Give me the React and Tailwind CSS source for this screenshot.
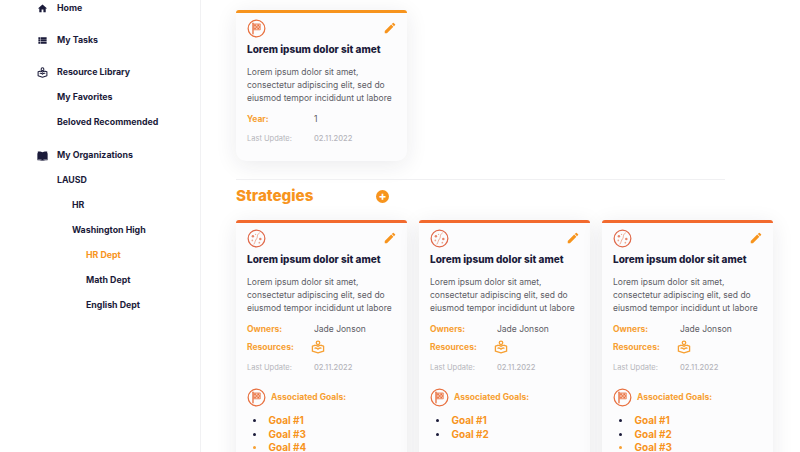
import React from "react";
import { MdEdit, MdHome, MdViewList } from "react-icons/md";

function FlagCircle({ className }) {
  return (
    <svg viewBox="0 0 20 20" className={className} fill="none">
      <circle cx="10" cy="10" r="8.8" stroke="#e8703f" strokeWidth="1.3" />
      <path d="M6.3 4.4V15.6" stroke="#e8703f" strokeWidth="1.4" strokeLinecap="round" />
      <path d="M7 5.2h7v6.2H7z" fill="#f8c9b5" stroke="#e8703f" strokeWidth="0.7" />
      <path d="M7.6 5.8h1.7v1.7H7.6zM11 5.8h1.7v1.7H11zM9.3 7.5H11v1.7H9.3zM12.7 7.5h1v1.7h-1zM7.6 9.2h1.7v1.7H7.6zM11 9.2h1.7v1.7H11z" fill="#e8703f" />
    </svg>
  );
}

function StrategyCircle({ className }) {
  return (
    <svg viewBox="0 0 20 20" className={className} fill="none">
      <circle cx="10" cy="10" r="8.8" stroke="#e0694a" strokeWidth="1.3" />
      <path d="M13 4.2C9.6 6.4 11.8 8.4 10 10.4C8.6 12 8.8 13.6 7.4 15.8" stroke="#eda58e" strokeWidth="1" strokeLinecap="round" />
      <circle cx="6.2" cy="7.6" r="1.3" fill="#e8866a" />
      <circle cx="14" cy="10.6" r="1.3" fill="#e8866a" />
      <circle cx="5.6" cy="12" r="0.9" fill="#eda58e" />
      <circle cx="13" cy="14.4" r="0.9" fill="#eda58e" />
      <circle cx="9" cy="5.6" r="0.7" fill="#eda58e" />
    </svg>
  );
}

function ResourceIcon({ className, color }) {
  return (
    <svg viewBox="0 0 16 16" className={className} fill="none" stroke={color} strokeWidth="1.5" strokeLinejoin="round" strokeLinecap="round">
      <circle cx="8" cy="3.2" r="2" />
      <path d="M4.4 6.2L1.6 7v5.8L8 14.8l6.4-2V7l-2.8-.8" />
      <path d="M4.6 9.2C6 9 7.4 9.6 8 10.6c.6-1 2-1.6 3.4-1.4" />
      <path d="M4.4 6.2C6 6 7.4 6.6 8 7.4c.6-.8 2-1.4 3.6-1.2" />
    </svg>
  );
}

function BookIcon({ className }) {
  return (
    <svg viewBox="0 0 14 14" className={className} fill="#1b1b3a">
      <path d="M1 2C3 1.6 5.6 1.8 7 3C8.4 1.8 11 1.6 13 2V12C11 11.6 8.8 11.8 7 13C5.2 11.8 3 11.6 1 12z" />
      <path d="M0.6 4H1.6V12.4C3.6 12 5.6 12.2 7 13C8.4 12.2 10.4 12 12.4 12.4V4H13.4V13.2C11 12.8 9 13 7 13.8C5 13 3 12.8 .6 13.2z" />
    </svg>
  );
}

function NavRow({ icon, children, indent = "pl-[57px]", color = "text-[#1b1b3a]", className = "" }) {
  return (
    <div className={`relative h-[14px] flex items-center ${indent} ${className}`}>
      {icon && <span className="absolute left-[36px] top-0 w-[13px] h-[14px] flex items-center justify-center text-[#1b1b3a]">{icon}</span>}
      <span className={`text-[8.8px] leading-[14px] font-bold whitespace-nowrap ${color}`}>{children}</span>
    </div>
  );
}

function Sidebar() {
  return (
    <aside className="w-[201px] h-[452px] shrink-0 border-r border-[#f1f1f3] bg-white flex flex-col pt-[1px]">
      <NavRow icon={<MdHome size={11} />}>Home</NavRow>
      <NavRow icon={<MdViewList size={11} />} className="mt-[18px]">My Tasks</NavRow>
      <NavRow icon={<ResourceIcon className="w-[11px] h-[11px]" color="#1b1b3a" />} className="mt-[18px]">Resource Library</NavRow>
      <NavRow className="mt-[11px]">My Favorites</NavRow>
      <NavRow className="mt-[11px]">Beloved Recommended</NavRow>
      <NavRow icon={<BookIcon className="w-[11px] h-[11px]" />} className="mt-[19px]">My Organizations</NavRow>
      <NavRow className="mt-[11px]">LAUSD</NavRow>
      <NavRow indent="pl-[72px]" className="mt-[11px]">HR</NavRow>
      <NavRow indent="pl-[72px]" className="mt-[11px]">Washington High</NavRow>
      <NavRow indent="pl-[86px]" color="text-[#f7941d]" className="mt-[11px]">HR Dept</NavRow>
      <NavRow indent="pl-[86px]" className="mt-[11px]">Math Dept</NavRow>
      <NavRow indent="pl-[86px]" className="mt-[11px]">English Dept</NavRow>
    </aside>
  );
}

function CardHead({ icon }) {
  return (
    <>
      <div className="flex items-center justify-between h-[18px] mt-[6px]">
        {icon}
        <MdEdit size={14} className="text-[#f7941d] translate-x-[1px]" />
      </div>
      <h3 className="mt-[4px] text-[10px] leading-[16px] font-extrabold text-[#1b1b3a] whitespace-nowrap">Lorem ipsum dolor sit amet</h3>
      <p className="mt-[9px] text-[8.5px] leading-[13px] text-[#5c5c66] whitespace-nowrap">
        Lorem ipsum dolor sit amet,<br />consectetur adipiscing elit, sed do<br />eiusmod tempor incididunt ut labore
      </p>
    </>
  );
}

function Meta({ label, children, className = "" }) {
  return (
    <div className={`flex items-center h-[12px] ${className}`}>
      <span className="w-[67px] text-[8.5px] font-bold text-[#f7a033] whitespace-nowrap">{label}</span>
      <span className="text-[8.5px] text-[#5c5c66] whitespace-nowrap">{children}</span>
    </div>
  );
}

function Updated({ className = "" }) {
  return (
    <div className={`flex items-center h-[12px] text-[7.5px] text-[#b5b5bb] whitespace-nowrap ${className}`}>
      <span className="w-[67px]">Last Update:</span>
      <span className="font-medium">02.11.2022</span>
    </div>
  );
}

function StrategyCard({ goals }) {
  return (
    <div className="w-[171px] h-[260px] shrink-0 bg-[#fcfcfd] rounded-[3px] border-t-[3px] border-[#f26a2e] shadow-[0_4px_22px_rgba(30,30,60,0.09)] px-[11px]">
      <CardHead icon={<StrategyCircle className="w-[19px] h-[19px]" />} />
      <Meta label="Owners:" className="mt-[8px]">Jade Jonson</Meta>
      <Meta label="Resources:" className="mt-[6px]">
        <ResourceIcon className="w-[14px] h-[14px] -ml-[3px]" color="#f7a033" />
      </Meta>
      <Updated className="mt-[9px]" />
      <div className="flex items-center mt-[14px] gap-[5px]">
        <FlagCircle className="w-[19px] h-[19px]" />
        <span className="text-[8.5px] font-bold text-[#f7a033] whitespace-nowrap">Associated Goals:</span>
      </div>
      <ul className="mt-[7px] flex flex-col">
        {goals.map((g, i) => (
          <li key={g} className="flex items-center h-[13.5px]">
            <span className={`ml-[6px] w-[3px] h-[3px] rounded-full ${i === 2 ? "bg-[#f7a033]" : "bg-[#1b1b3a]"}`} />
            <span className="ml-[12.5px] text-[10px] font-bold text-[#f7941d] whitespace-nowrap">{g}</span>
          </li>
        ))}
      </ul>
    </div>
  );
}

export default function App() {
  return (
    <div className="w-[800px] h-[452px] overflow-hidden bg-white flex" style={{ fontFamily: '"Inter", "Noto Sans", sans-serif' }}>
      <Sidebar />
      <main className="flex-1 pl-[35px] pt-[10px]">
        <div className="w-[171px] h-[151px] bg-[#fcfcfd] rounded-b-[10px] rounded-t-[3px] border-t-[3px] border-[#f7941d] shadow-[0_4px_22px_rgba(30,30,60,0.09)] px-[11px]">
          <CardHead icon={<FlagCircle className="w-[19px] h-[19px]" />} />
          <Meta label="Year:" className="mt-[8px]">1</Meta>
          <Updated className="mt-[8px]" />
        </div>
        <div className="w-[489px] h-px bg-[#f0f0f2] mt-[18px]" />
        <div className="flex items-center h-[20px] mt-[6px]">
          <h2 className="w-[140px] text-[15.2px] font-extrabold text-[#f7941d] whitespace-nowrap">Strategies</h2>
          <span className="w-[13px] h-[13px] rounded-full bg-[#f7941d] flex items-center justify-center text-white text-[12px] leading-none font-bold">+</span>
        </div>
        <div className="flex gap-[12px] mt-[14px]">
          <StrategyCard goals={["Goal #1", "Goal #3", "Goal #4"]} />
          <StrategyCard goals={["Goal #1", "Goal #2"]} />
          <StrategyCard goals={["Goal #1", "Goal #2", "Goal #3"]} />
        </div>
      </main>
    </div>
  );
}
